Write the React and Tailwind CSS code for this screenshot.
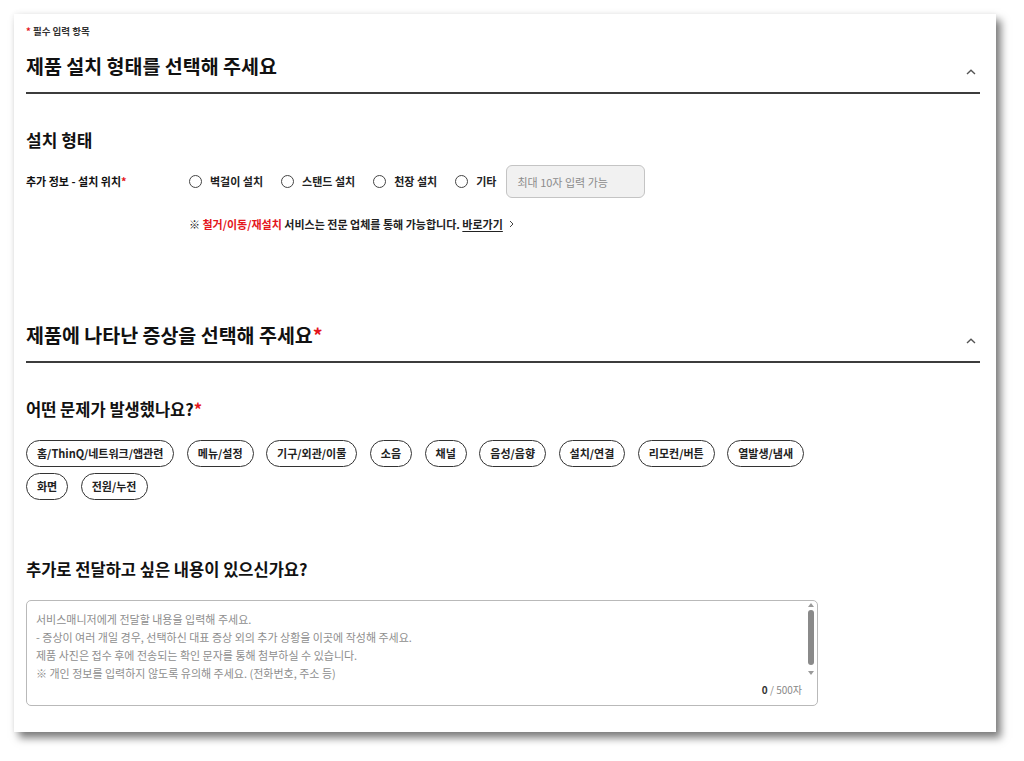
import { useState } from "react";

const symptoms = [
  "홈/ThinQ/네트워크/앱관련",
  "메뉴/설정",
  "기구/외관/이물",
  "소음",
  "채널",
  "음성/음향",
  "설치/연결",
  "리모컨/버튼",
  "열발생/냄새",
  "화면",
  "전원/누전",
];

const places = ["벽걸이 설치", "스탠드 설치", "천장 설치", "기타"];

function ChevronUp() {
  return (
    <svg className="w-[10px] h-[6px] text-[#555]" viewBox="0 0 10 6" fill="none">
      <path d="M1 5L5 1.3L9 5" stroke="currentColor" strokeWidth="1.4" />
    </svg>
  );
}

function SectionHeader({ title, required }) {
  return (
    <div className="flex items-center justify-between pb-[13px] border-b-2 border-[#3c3c3c]">
      <h2 className="text-[19.5px] leading-[26px] font-bold text-[#111]">
        {title}
        {required && <span className="text-[#e4151c]">*</span>}
      </h2>
      <div className="mr-[4px] mt-[12px]">
        <ChevronUp />
      </div>
    </div>
  );
}

export default function App() {
  const [place, setPlace] = useState(null);
  const [picked, setPicked] = useState([]);

  const toggle = (s) =>
    setPicked((p) => (p.includes(s) ? p.filter((x) => x !== s) : [...p, s]));

  return (
    <div className="min-h-screen bg-white pt-[14px] pl-[14px] font-['Noto_Sans_CJK_KR','Noto_Sans',sans-serif] text-[#111]">
      <div className="w-[982px] bg-white pt-[10px] pl-[12px] pr-[16px] pb-[26px] shadow-[5px_6px_8px_rgba(0,0,0,0.5),0_0_6px_rgba(0,0,0,0.08)]">
        {/* required note */}
        <p className="text-[9.5px] leading-[14px] font-bold text-[#333]">
          <span className="text-[#e4151c]">*</span> 필수 입력 항목
        </p>

        {/* install section */}
        <div className="mt-[15px]">
          <SectionHeader title="제품 설치 형태를 선택해 주세요" />
        </div>

        <h3 className="mt-[34px] text-[17px] leading-[24px] font-bold">설치 형태</h3>

        <div className="mt-[13px] flex items-center h-[33px]">
          <div className="w-[163px] text-[11px] font-bold">
            추가 정보 - 설치 위치<span className="text-[#e4151c]">*</span>
          </div>
          <div className="flex items-center gap-[18px]">
            {places.map((p) => (
              <label
                key={p}
                className="flex items-center cursor-pointer"
                onClick={() => setPlace(p)}
              >
                <span className="w-[13px] h-[13px] rounded-full border-[1.5px] border-[#444] flex items-center justify-center">
                  {place === p && <span className="w-[5px] h-[5px] rounded-full bg-[#444]" />}
                </span>
                <span className="ml-[8px] text-[11px] font-bold text-[#222]">{p}</span>
              </label>
            ))}
          </div>
          <input
            className="ml-[10px] w-[139px] h-[33px] rounded-[6px] border border-[#c4c4c4] bg-[#f1f1f1] px-[10px] text-[11px] placeholder:text-[#8c8c8c] outline-none"
            placeholder="최대 10자 입력 가능"
          />
        </div>

        <p className="mt-[17px] ml-[163px] text-[11px] leading-[18px] font-bold text-[#222] flex items-center">
          <span>
            ※ <span className="text-[#e4151c]">철거/이동/재설치</span> 서비스는 전문 업체를
            통해 가능합니다. <span className="underline underline-offset-2">바로가기</span>
          </span>
          <svg className="ml-[6px] w-[5px] h-[8px] text-[#444]" viewBox="0 0 5 8" fill="none">
            <path d="M1 1L4 4L1 7" stroke="currentColor" strokeWidth="1" />
          </svg>
        </p>

        {/* symptom section */}
        <div className="mt-[89px]">
          <SectionHeader title="제품에 나타난 증상을 선택해 주세요" required />
        </div>

        <h3 className="mt-[34px] text-[16.5px] leading-[24px] font-bold">
          어떤 문제가 발생했나요?<span className="text-[#e4151c]">*</span>
        </h3>

        <div className="mt-[19px] w-[800px] flex flex-wrap gap-x-[12.5px] gap-y-[6px]">
          {symptoms.map((s) => (
            <button
              key={s}
              onClick={() => toggle(s)}
              className={`h-[27px] px-[10px] rounded-full border border-[#333] text-[11px] font-bold whitespace-nowrap ${
                picked.includes(s) ? "bg-[#333] text-white" : "bg-white text-[#222]"
              }`}
            >
              {s}
            </button>
          ))}
        </div>

        {/* extra comments */}
        <h3 className="mt-[57px] text-[16.5px] leading-[24px] font-bold">
          추가로 전달하고 싶은 내용이 있으신가요?
        </h3>

        <div className="relative mt-[19px] w-[792px] h-[106px] rounded-[5px] border border-[#b9b9b9]">
          <textarea
            className="w-full h-full resize-none rounded-[5px] pl-[9px] pr-[24px] pt-[9px] text-[11px] leading-[18px] outline-none overflow-hidden placeholder:text-[#8e8e8e]"
            placeholder={
              "서비스매니저에게 전달할 내용을 입력해 주세요.\n- 증상이 여러 개일 경우, 선택하신 대표 증상 외의 추가 상황을 이곳에 작성해 주세요.\n제품 사진은 접수 후에 전송되는 확인 문자를 통해 첨부하실 수 있습니다.\n※ 개인 정보를 입력하지 않도록 유의해 주세요. (전화번호, 주소 등)"
            }
          />
          {/* scrollbar */}
          <div className="absolute right-[2px] top-[2px] w-[9px] h-[78px] flex flex-col items-center">
            <span className="w-0 h-0 border-l-[3px] border-r-[3px] border-b-[4px] border-l-transparent border-r-transparent border-b-[#9a9a9a]" />
            <span className="mt-[3px] w-[6px] h-[55px] rounded-full bg-[#8a8a8a]" />
            <span className="mt-[6px] w-0 h-0 border-l-[3px] border-r-[3px] border-t-[4px] border-l-transparent border-r-transparent border-t-[#9a9a9a]" />
          </div>
          <div className="absolute right-[15px] bottom-[8px] text-[10px] leading-[14px] text-[#888]">
            <span className="font-bold text-[#333]">0</span> / 500자
          </div>
        </div>
      </div>
    </div>
  );
}
